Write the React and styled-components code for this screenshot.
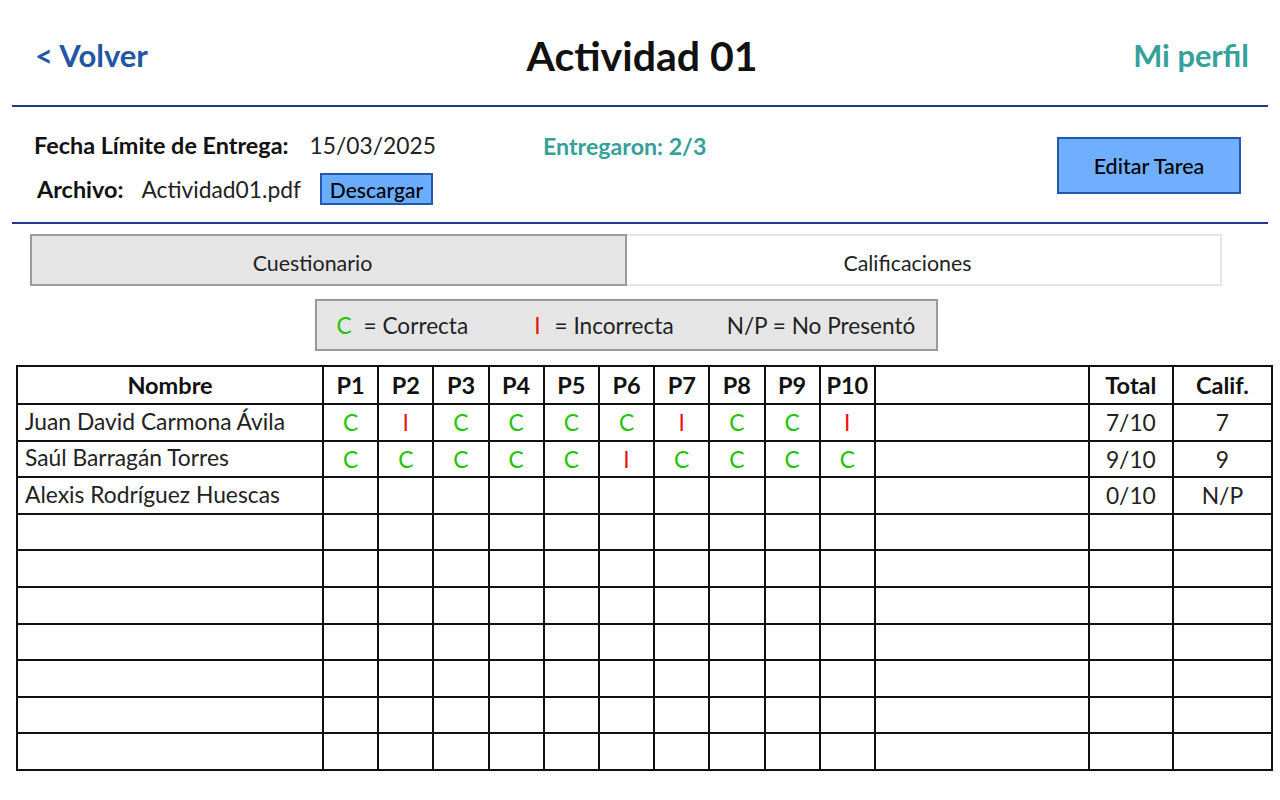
import React from "react";
import styled, { createGlobalStyle } from "styled-components";

const GlobalStyle = createGlobalStyle`
  body {
    margin: 0;
    background: #ffffff;
    font-family: Lato, "Open Sans", sans-serif;
    color: #111;
  }
`;

const Page = styled.div`
  width: 1280px;
  padding-top: 10px;
`;

const Header = styled.header`
  margin: 0 12px;
  height: 97px;
  box-sizing: border-box;
  padding: 0 19px 5px 23px;
  display: flex;
  align-items: center;
  justify-content: space-between;
  border-bottom: 2px solid #1f3a8a;
`;

const NavLink = styled.a`
  font-size: ${(props) => props.size}px;
  font-weight: 700;
  color: ${(props) => props.color};
  text-decoration: none;
  width: 220px;
  text-align: ${(props) => props.align};
`;

const Title = styled.h1`
  margin: 0;
  font-size: 41px;
  font-weight: 700;
  color: #111;
`;

const Info = styled.section`
  margin: 0 12px;
  padding: 24px 25px 17px 22px;
  display: flex;
  align-items: flex-start;
  border-bottom: 2px solid #1f3a8a;
`;

const InfoLeft = styled.div`
  width: 509px;
  display: flex;
  flex-direction: column;
  gap: 14px;
`;

const InfoRow = styled.div`
  display: flex;
  align-items: center;
  height: ${(props) => props.h}px;
  padding-left: ${(props) => props.indent || 0}px;
`;

const Label = styled.span`
  font-weight: 700;
  font-size: 23.4px;
  margin-right: ${(props) => props.gap}px;
`;

const Value = styled.span`
  font-size: 22.8px;
  color: #222;
  margin-right: ${(props) => props.gap || 0}px;
`;

const SmallButton = styled.button`
  font-family: inherit;
  font-size: 21px;
  font-weight: 500;
  color: #000;
  background: #6aacff;
  border: 2px solid #2458a8;
  height: 32px;
  width: 113px;
  padding: 0;
`;

const Delivered = styled.div`
  margin-top: 1px;
  line-height: 28px;
  font-size: 23.2px;
  font-weight: 700;
  color: #36a09a;
`;

const EditButton = styled.button`
  margin-left: auto;
  margin-top: 6px;
  margin-right: 2px;
  width: 184px;
  height: 57px;
  font-family: inherit;
  font-size: 21.5px;
  font-weight: 500;
  color: #000;
  background: #70aeff;
  border: 2px solid #2458a8;
`;

const Tabs = styled.div`
  margin: 10px 0 0 30px;
  width: 1192px;
  display: flex;
`;

const Tab = styled.div`
  flex: 1;
  height: 52px;
  box-sizing: border-box;
  padding: 5px 32px 0 0;
  display: flex;
  align-items: center;
  justify-content: center;
  font-size: 21.4px;
  color: #222;
  background: ${(props) => (props.active ? "#e5e5e5" : "#ffffff")};
  border: 2px solid ${(props) => (props.active ? "#9a9a9a" : "#e5e5e5")};
  ${(props) => !props.active && "border-left: none;"}
`;

const LegendWrap = styled.div`
  margin: 13px 0 0 30px;
  width: 1192px;
  display: flex;
  justify-content: center;
`;

const Legend = styled.div`
  width: 623px;
  height: 52px;
  box-sizing: border-box;
  display: flex;
  align-items: center;
  padding-left: 20px;
  background: #e5e5e5;
  border: 2px solid #9a9a9a;
  font-size: 22.6px;
  color: #222;
`;

const LegendItem = styled.span`
  margin-left: ${(props) => props.offset || 0}px;
  white-space: pre;
`;

const Mark = styled.span`
  color: ${(props) => (props.ok ? "#22c400" : "#ee1111")};
  margin-right: ${(props) => props.gap || 0}px;
`;

const Table = styled.table`
  margin: 14px 0 0 16px;
  width: 1255px;
  table-layout: fixed;
  border-collapse: collapse;
  font-size: 22.8px;
`;

const Th = styled.th`
  border: 2px solid #111;
  height: 36px;
  padding: 0;
  font-size: 23.5px;
  font-weight: 700;
  text-align: center;
`;

const Td = styled.td`
  border: 2px solid #111;
  height: ${(props) => (props.left ? "31.6px" : "34.5px")};
  padding: ${(props) => (props.left ? "0 0 3px 7px" : "0")};
  text-align: ${(props) => (props.left ? "left" : "center")};
  color: #222;
  white-space: nowrap;
`;

const students = [
  { name: "Juan David Carmona Ávila", answers: "CICCCCICCI", total: "7/10", grade: "7" },
  { name: "Saúl Barragán Torres", answers: "CCCCCICCCC", total: "9/10", grade: "9" },
  { name: "Alexis Rodríguez Huescas", answers: "", total: "0/10", grade: "N/P" },
];

const questions = ["P1", "P2", "P3", "P4", "P5", "P6", "P7", "P8", "P9", "P10"];

function Row({ student }) {
  return (
    <tr>
      <Td left>{student ? student.name : ""}</Td>
      {questions.map((q, i) => {
        const a = student && student.answers[i];
        return <Td key={q}>{a ? <Mark ok={a === "C"}>{a}</Mark> : ""}</Td>;
      })}
      <Td />
      <Td>{student ? student.total : ""}</Td>
      <Td>{student ? student.grade : ""}</Td>
    </tr>
  );
}

export default function App() {
  const rows = [...students, ...Array(7).fill(null)];
  return (
    <Page>
      <GlobalStyle />
      <Header>
        <NavLink color="#1f57a4" align="left" size={31}>&lt; Volver</NavLink>
        <Title>Actividad 01</Title>
        <NavLink color="#36a09a" align="right" size={30.8}>Mi perfil</NavLink>
      </Header>

      <Info>
        <InfoLeft>
          <InfoRow h={28}>
            <Label gap={21}>Fecha Límite de Entrega:</Label>
            <Value>15/03/2025</Value>
          </InfoRow>
          <InfoRow h={32} indent={3}>
            <Label gap={18}>Archivo:</Label>
            <Value gap={19}>Actividad01.pdf</Value>
            <SmallButton>Descargar</SmallButton>
          </InfoRow>
        </InfoLeft>
        <Delivered>Entregaron: 2/3</Delivered>
        <EditButton>Editar Tarea</EditButton>
      </Info>

      <Tabs>
        <Tab active>Cuestionario</Tab>
        <Tab>Calificaciones</Tab>
      </Tabs>

      <LegendWrap>
        <Legend>
          <LegendItem><Mark ok gap={12}>C</Mark>= Correcta</LegendItem>
          <LegendItem offset={66}><Mark gap={14}>I</Mark>= Incorrecta</LegendItem>
          <LegendItem offset={53}>N/P = No Presentó</LegendItem>
        </Legend>
      </LegendWrap>

      <Table>
        <colgroup>
          <col style={{ width: 306 }} />
          {questions.map((q) => (
            <col key={q} style={{ width: 55.2 }} />
          ))}
          <col style={{ width: 214 }} />
          <col style={{ width: 84 }} />
          <col style={{ width: 99 }} />
        </colgroup>
        <thead>
          <tr>
            <Th>Nombre</Th>
            {questions.map((q) => (
              <Th key={q}>{q}</Th>
            ))}
            <Th />
            <Th>Total</Th>
            <Th>Calif.</Th>
          </tr>
        </thead>
        <tbody>
          {rows.map((s, i) => (
            <Row key={i} student={s} />
          ))}
        </tbody>
      </Table>
    </Page>
  );
}
